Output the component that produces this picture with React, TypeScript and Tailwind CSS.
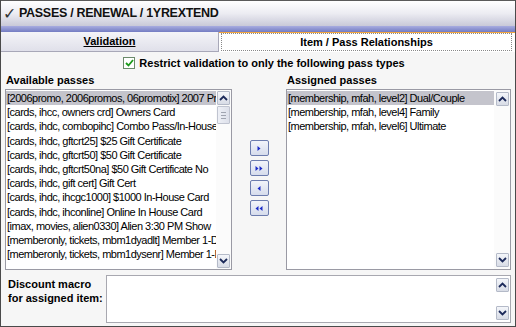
import React from 'react';

const available = [
  '[2006promo, 2006promos, 06promotix] 2007 Promo',
  '[cards, ihcc, owners crd] Owners Card',
  '[cards, ihdc, combopihc] Combo Pass/In-House',
  '[cards, ihdc, gftcrt25] $25 Gift Certificate',
  '[cards, ihdc, gftcrt50] $50 Gift Certificate',
  '[cards, ihdc, gftcrt50na] $50 Gift Certificate No',
  '[cards, ihdc, gift cert] Gift Cert',
  '[cards, ihdc, ihcgc1000] $1000 In-House Card',
  '[cards, ihdc, ihconline] Online In House Card',
  '[imax, movies, alien0330] Alien 3:30 PM Show',
  '[memberonly, tickets, mbm1dyadlt] Member 1-Day',
  '[memberonly, tickets, mbm1dysenr] Member 1-Day',
];

const assigned = [
  '[membership, mfah, level2] Dual/Couple',
  '[membership, mfah, level4] Family',
  '[membership, mfah, level6] Ultimate',
];

function Chevron({ up }: { up?: boolean }) {
  return (
    <svg width="9" height="6" viewBox="0 0 9 6">
      <path
        d={up ? 'M1 5 L4.5 1.5 L8 5' : 'M1 1 L4.5 4.5 L8 1'}
        fill="none"
        stroke="#1c2a5a"
        strokeWidth="1.8"
      />
    </svg>
  );
}

function ScrollBtn({ up }: { up?: boolean }) {
  return (
    <div className="w-[13px] h-[14px] flex items-center justify-center bg-gradient-to-b from-[#f4f6fa] to-[#d8dce6] border border-[#b4bac8] rounded-[1px]">
      <Chevron up={up} />
    </div>
  );
}

function MoveBtn({ dir, double }: { dir: 'r' | 'l'; double?: boolean }) {
  const tri = (x: number) =>
    dir === 'r' ? `M${x} 2 L${x + 3} 4.5 L${x} 7 Z` : `M${x + 3} 2 L${x} 4.5 L${x + 3} 7 Z`;
  return (
    <div className="w-[19px] h-[16px] flex items-center justify-center bg-gradient-to-b from-[#f2f4fa] to-[#d6dcec] border border-[#6c7cae] rounded-[2px]">
      <svg width="10" height="9" viewBox="0 0 10 9">
        {double ? (
          <>
            <path d={tri(1.5)} fill="#1c2cc8" />
            <path d={tri(5.5)} fill="#1c2cc8" />
          </>
        ) : (
          <path d={tri(3.5)} fill="#1c2cc8" />
        )}
      </svg>
    </div>
  );
}

function Row({ text, selected }: { text: string; selected?: boolean }) {
  return (
    <div
      className={`h-[14.2px] leading-[14.2px] text-[11px] tracking-[-0.5px] whitespace-nowrap pl-[1px] ${selected ? 'bg-[#c4c4cc]' : ''}`}
    >
      {text}
    </div>
  );
}

export default function App() {
  return (
    <div className="w-[516px] h-[327px] overflow-hidden bg-[#f6f6f6] flex flex-col border-x border-b border-[#4a4a4a] font-['Liberation_Sans',Arial,sans-serif] text-black">
      {/* title bar */}
      <div className="h-[26px] flex items-center gap-[3px] pl-[2px] bg-gradient-to-b from-[#ffffff] via-[#ececf2] to-[#c9c9d8] border-t border-[#5a5a5a]">
        <span className="text-[16px] leading-none text-[#333]">✓</span>
        <span className="text-[12.5px] font-bold tracking-[-0.3px] text-[#111]">PASSES / RENEWAL / 1YREXTEND</span>
      </div>
      <div className="h-[6px] bg-gradient-to-b from-[#a8ace0] to-[#747cc2]" />

      {/* tabs */}
      <div className="h-[20px] flex">
        <div className="w-[218px] flex items-center justify-center bg-gradient-to-b from-[#f4f4f8] to-[#e0e0ea] border-r border-b border-[#a8a8b8]">
          <span className="text-[11px] font-bold underline">Validation</span>
        </div>
        <div className="flex-1 flex flex-col bg-white">
          <div className="h-[2px] bg-[#f2a640]" />
          <div className="flex-1 flex items-center justify-center border border-dotted border-[#888] ml-[2px] mr-[3px] mb-[1px]">
            <span className="text-[11px] font-bold">Item / Pass Relationships</span>
          </div>
        </div>
      </div>

      {/* checkbox row */}
      <div className="h-[20px] flex items-center justify-center gap-[4px] mt-[1px] pl-[12px]">
        <div className="w-[12px] h-[12px] bg-white border border-[#6a8a6a] flex items-center justify-center">
          <svg width="9" height="8" viewBox="0 0 9 8">
            <path d="M1 4 L3.5 6.5 L8 1" fill="none" stroke="#1a9a1a" strokeWidth="1.8" />
          </svg>
        </div>
        <span className="text-[11px] font-bold">Restrict validation to only the following pass types</span>
      </div>

      {/* lists */}
      <div className="flex px-[4px]">
        <div className="w-[227px] shrink-0 flex flex-col">
          <div className="text-[11px] font-bold h-[14px] leading-[14px] pl-[1px]">Available passes</div>
          <div className="h-[181px] mt-[2px] bg-white border border-[#9a9aa4] flex">
            <div className="flex-1 min-w-0 overflow-hidden pt-[1px]">
              {available.map((t, i) => (
                <Row key={i} text={t} selected={i === 0} />
              ))}
            </div>
            <div className="w-[15px] flex flex-col justify-between items-center py-[1px] bg-[#fbfbfb]">
              <div className="flex flex-col items-center gap-[1px]">
                <ScrollBtn up />
                <div className="w-[13px] h-[18px] bg-gradient-to-r from-[#eef0f6] to-[#dde0ea] border border-[#c0c4d0] rounded-[1px] flex flex-col items-center justify-center gap-[2px]">
                  <div className="w-[5px] h-px bg-[#a0a4b0]" />
                  <div className="w-[5px] h-px bg-[#a0a4b0]" />
                  <div className="w-[5px] h-px bg-[#a0a4b0]" />
                </div>
              </div>
              <ScrollBtn />
            </div>
          </div>
        </div>

        <div className="w-[54px] shrink-0 flex flex-col items-center pt-[67px] gap-[4px]">
          <MoveBtn dir="r" />
          <MoveBtn dir="r" double />
          <MoveBtn dir="l" />
          <MoveBtn dir="l" double />
        </div>

        <div className="flex-1 min-w-0 flex flex-col">
          <div className="text-[11px] font-bold h-[14px] leading-[14px] pl-[1px]">Assigned passes</div>
          <div className="h-[181px] mt-[2px] bg-white border border-[#9a9aa4] flex">
            <div className="flex-1 min-w-0 overflow-hidden pt-[1px]">
              {assigned.map((t, i) => (
                <Row key={i} text={t} selected={i === 0} />
              ))}
            </div>
            <div className="w-[16px] flex flex-col justify-between items-center py-[2px] bg-[#fbfbfb]">
              <ScrollBtn up />
              <ScrollBtn />
            </div>
          </div>
        </div>
      </div>

      {/* discount macro */}
      <div className="flex mt-[5px] px-[4px]">
        <div className="w-[101px] pl-[3px] pt-[2px] text-[11px] font-bold leading-[14px]">
          Discount macro
          <br />
          for assigned item:
        </div>
        <div className="flex-1 h-[48px] bg-white border border-[#a8a8b0] flex justify-end">
          <div className="w-[16px] flex flex-col justify-between items-center py-[2px]">
            <ScrollBtn up />
            <ScrollBtn />
          </div>
        </div>
      </div>
    </div>
  );
}
